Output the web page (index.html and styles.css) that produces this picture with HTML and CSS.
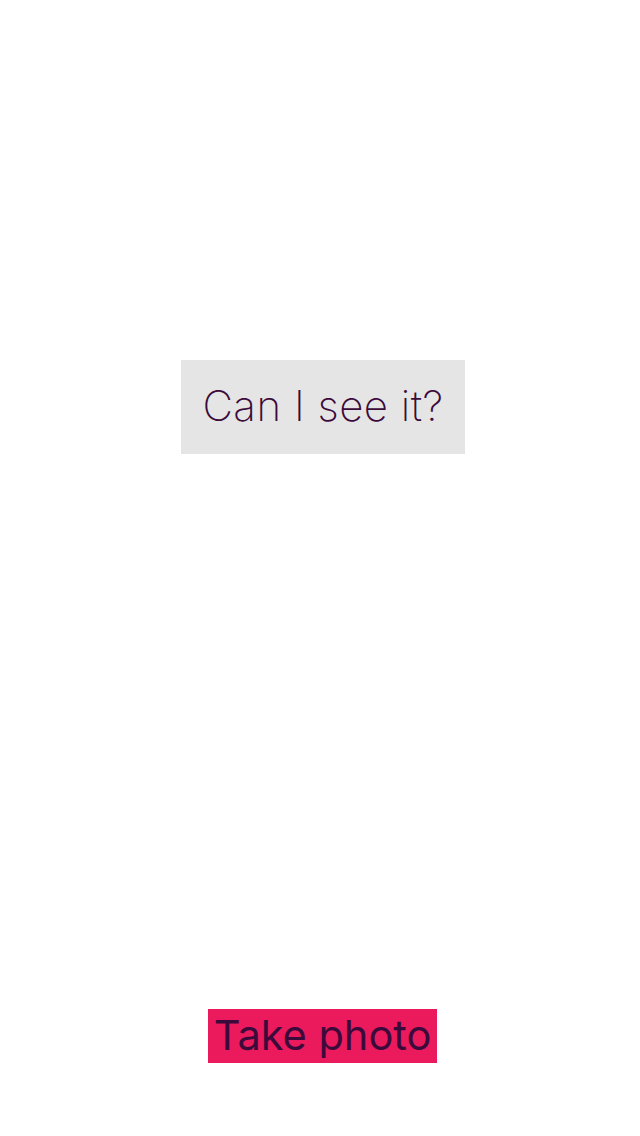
FILE: index.html
```html
<!DOCTYPE html>
<html>
<head>
<meta charset="utf-8">
<link rel="stylesheet" href="styles.css">
</head>
<body>
<main class="screen">
  <div class="prompt">Can I see it?</div>
  <div class="spacer"></div>
  <button class="action">Take photo</button>
</main>
</body>
</html>
```
FILE: styles.css
```css
html, body {
  margin: 0;
  padding: 0;
  background: #ffffff;
}
.screen {
  width: 640px;
  height: 1136px;
  display: flex;
  flex-direction: column;
  align-items: center;
  box-sizing: border-box;
  padding-top: 360px;
  padding-bottom: 73px;
  font-family: Inter, "Noto Sans", sans-serif;
}
.prompt {
  margin-left: 6px;
  width: 284px;
  height: 94px;
  box-sizing: border-box;
  background: #e5e5e5;
  color: #3c0a3a;
  font-size: 42px;
  font-weight: 200;
  letter-spacing: 0.5px;
  white-space: nowrap;
  display: flex;
  align-items: center;
  justify-content: center;
  padding-bottom: 4px;
}
.spacer {
  flex: 1;
}
.action {
  margin-left: 5px;
  width: 229px;
  height: 54px;
  border: 0;
  padding: 0 0 2px 0;
  background: #ea1a5d;
  color: #3c0a3a;
  font-family: Inter, "Noto Sans", sans-serif;
  font-size: 41.5px;
  font-weight: 400;
  letter-spacing: 0;
  white-space: nowrap;
  display: flex;
  align-items: center;
  justify-content: center;
}
```
